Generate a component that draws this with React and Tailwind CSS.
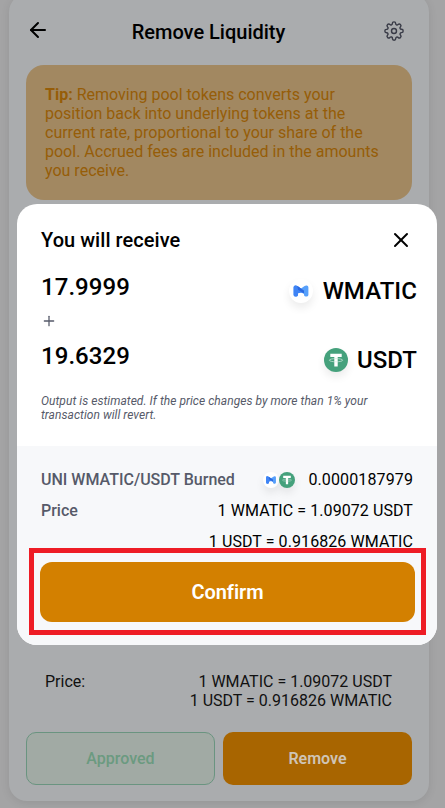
import { ArrowLeft, X, Plus } from 'lucide-react';

function Gear() {
  return (
    <svg className="block h-5 w-5" viewBox="0 0 24 24" fill="none" stroke="#393b47" strokeWidth="1.7" strokeLinecap="round" strokeLinejoin="round">
      <circle cx="12" cy="12" r="3" />
      <path d="M19.400 15a1.650 1.650 0 0 0 .330 1.820l.060.060a2 2 0 0 1-2.830 2.830l-.060-.060a1.650 1.650 0 0 0-2.800 1.180V21a2 2 0 0 1-4 0v-.090a1.650 1.650 0 0 0-2.900-1.260l-.060.060a2 2 0 0 1-2.830-2.830l.060-.060a1.650 1.650 0 0 0-1.180-2.800H3a2 2 0 0 1 0-4h.090a1.650 1.650 0 0 0 1.260-2.900l-.060-.060a2 2 0 0 1 2.830-2.830l.060.060a1.650 1.650 0 0 0 2.820-1.170V3a2 2 0 0 1 4 0v.090a1.650 1.650 0 0 0 2.820 1.200l.060-.060a2 2 0 0 1 2.830 2.830l-.060.060a1.650 1.650 0 0 0 1.170 2.820H21a2 2 0 0 1 0 4h-.090a1.650 1.650 0 0 0-1.510 1z" />
    </svg>
  );
}

function MaticLogo({ className }) {
  return (
    <span className={`block rounded-full bg-white shadow-[0_5px_8px_rgba(0,0,0,0.08)] ${className}`}>
      <svg className="block h-full w-full" viewBox="0 0 24 24">
        <path d="M4.600 8.300q0-2.100 2.200-1.800l1.600.5L12 9.400l3.600-2.400 1.600-.5q2.200-.3 2.200 1.800v7.500q0 1.700-1.500 1.700h-1.400q-1.500 0-1.500-1.700v-1.600L12 13.400l-3 .8v1.600q0 1.700-1.500 1.700H6.100q-1.500 0-1.500-1.700z" fill="#57a0fb" />
        <path d="M4.600 8.300q0-2.100 2.200-1.800l1.600.5 6.600 4.700v3l-3-1.300-3 .8v1.600q0 1.700-1.500 1.700H6.100q-1.500 0-1.500-1.700z" fill="#3f84f5" />
        <path d="m8.400 7 6.600 4.700v2.500L9 10.800z" fill="#2a68e0" />
      </svg>
    </span>
  );
}

function TetherLogo({ className }) {
  return (
    <span className={`block rounded-full bg-[#45a17c] shadow-[0_5px_8px_rgba(0,0,0,0.08)] ${className}`}>
      <svg className="block h-full w-full" viewBox="0 0 24 24">
        <path d="M6.300 5.700h11.400v3.200h-4v9.600h-3.400V8.900h-4z" fill="#fff" />
        <ellipse cx="12" cy="12.200" rx="6.700" ry="1.600" fill="none" stroke="#d5ece2" strokeWidth=".7" />
      </svg>
    </span>
  );
}

function Modal() {
  return (
    <div className="absolute left-[17px] top-[204px] flex h-[441px] w-[420px] flex-col overflow-hidden rounded-[20px] bg-white text-black">
      <div className="h-[242px] pl-6 pr-5 pt-6">
        <div className="flex h-6 items-center justify-between pr-1">
          <h2 className="text-xl font-[480] leading-6 tracking-[0.05px]">You will receive</h2>
          <X size={24} strokeWidth={2} />
        </div>
        <div className="mt-5 flex h-[38px] items-start justify-between text-2xl font-[480]">
          <span className="leading-[30px] tracking-[0.05px]">17.9999</span>
          <span className="flex items-center gap-[10px] leading-[38px] tracking-[0.08px]"><MaticLogo className="h-6 w-6" />WMATIC</span>
        </div>
        <Plus className="mt-[3px] block text-[#565a69]" size={16} strokeWidth={1.9} />
        <div className="mt-3 flex h-[38px] items-start justify-between text-2xl font-[480]">
          <span className="leading-[30px] tracking-[0.05px]">19.6329</span>
          <span className="flex items-center gap-[9px] leading-[38px]"><TetherLogo className="h-6 w-6" />USDT</span>
        </div>
        <p className="mt-[15px] text-xs italic leading-[14px] tracking-[0.045px] text-[#565a69]">
          Output is estimated. If the price changes by more than 1% your<br />transaction will revert.
        </p>
      </div>
      <div className="flex-1 bg-[#f7f8fa] px-6 pt-6 text-base leading-[19px]">
        <div className="flex items-center justify-between">
          <span className="font-[480] text-[#565a69]">UNI WMATIC/USDT Burned</span>
          <span className="flex items-center">
            <MaticLogo className="h-4 w-4" />
            <TetherLogo className="h-4 w-4" />
            <span className="ml-[13px] tracking-[0.12px]">0.0000187979</span>
          </span>
        </div>
        <div className="mt-3 flex justify-between">
          <span className="font-[480] text-[#565a69]">Price</span>
          <span className="tracking-[0.08px]">1 WMATIC = 1.09072 USDT</span>
        </div>
        <div className="mt-3 text-right tracking-[0.08px]">1 USDT = 0.916826 WMATIC</div>
        <button className="-ml-px mt-[11px] block h-[60px] w-[375px] rounded-xl bg-[#d38000] text-xl font-semibold tracking-[-0.05px] text-white">Confirm</button>
      </div>
    </div>
  );
}

export default function App() {
  return (
    <div className="relative h-[808px] w-[445px] overflow-hidden bg-[#a4a4a5] font-['Roboto','Liberation_Sans',sans-serif]">
      <div className="-mt-[6px] ml-[9px] flex h-[807px] w-[420px] flex-col rounded-[18px] bg-[#aaacae] px-[17px] pt-[26px] shadow-[0_2px_10px_rgba(0,0,0,0.09)]">
        <header className="grid h-6 grid-cols-[24px_1fr_28px] items-center">
          <ArrowLeft className="-mt-1 block" size={24} strokeWidth={2} />
          <h1 className="pr-[17px] text-center text-xl font-[480] leading-6">Remove Liquidity</h1>
          <span className="-mt-0.5 block"><Gear /></span>
        </header>
        <div className="mt-[21px] h-[135px] shrink-0 rounded-[18px] bg-[#a28861] pl-[19px] pt-5 text-base leading-[19px] text-[#965d08]">
          <b className="font-bold">Tip:</b> Removing pool tokens converts your<br />
          position back into underlying tokens at the<br />
          current rate, proportional to your share of the<br />
          pool. Accrued fees are included in the amounts<br />
          you receive.
        </div>
        <div className="mt-[472px] flex justify-between pl-[19px] pr-[20px] text-base leading-[19px] text-[#111]">
          <span>Price:</span>
          <span className="text-right">1 WMATIC = 1.09072 USDT<br />1 USDT = 0.916826 WMATIC</span>
        </div>
        <div className="mt-[22px] flex gap-2">
          <button className="h-[53px] w-[189px] rounded-[10px] border border-[#6a9480] bg-[#a1aaa4] text-base font-medium text-[#6b9a80]">Approved</button>
          <button className="h-[53px] w-[189px] rounded-[10px] bg-[#a86500] text-base font-semibold text-[#cfc4b5]">Remove</button>
        </div>
      </div>
      <Modal />
      <div className="absolute left-[29px] top-[548px] h-[87px] w-[397px] border-[5px] border-[#ee1c25]" />
    </div>
  );
}
